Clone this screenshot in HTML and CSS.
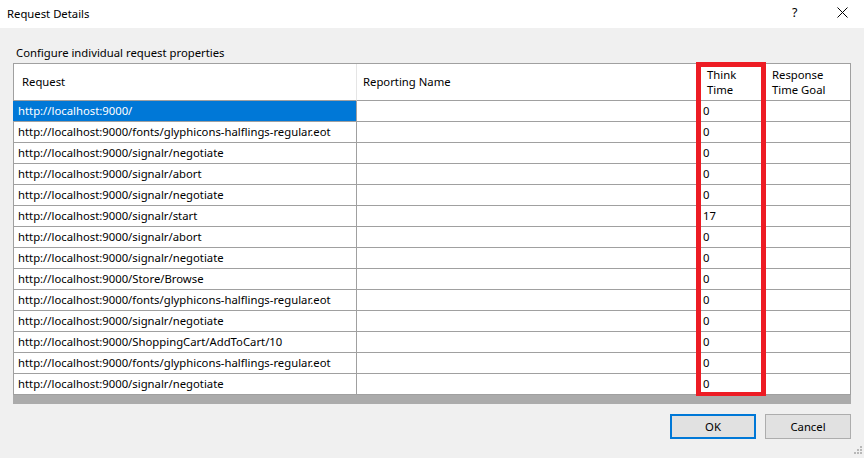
FILE: index.html
```html
<!DOCTYPE html>
<html>
<head>
<meta charset="utf-8">
<link rel="stylesheet" href="styles.css">
</head>
<body>
<div class="dialog">
  <div class="titlebar">
    <span class="title">Request Details</span>
    <span class="help">?</span>
    <span class="close"><svg width="11" height="11" viewBox="0 0 11 11"><path d="M0.5 0.5 L10.5 10.5 M10.5 0.5 L0.5 10.5" stroke="#000" stroke-width="1" fill="none"/></svg></span>
  </div>
  <div class="body">
    <div class="label">Configure individual request properties</div>
    <div class="gridwrap">
      <div class="grid">
        <div class="hc c1">Request</div>
        <div class="hc c2">Reporting Name</div>
        <div class="hc c3"><span>Think</span><span>Time</span></div>
        <div class="hc c4"><span>Response</span><span>Time Goal</span></div>

        <div class="dc c1 sel">http://localhost:9000/</div><div class="dc c2"></div><div class="dc c3">0</div><div class="dc c4"></div>
        <div class="dc c1">http://localhost:9000/fonts/glyphicons-halflings-regular.eot</div><div class="dc c2"></div><div class="dc c3">0</div><div class="dc c4"></div>
        <div class="dc c1">http://localhost:9000/signalr/negotiate</div><div class="dc c2"></div><div class="dc c3">0</div><div class="dc c4"></div>
        <div class="dc c1">http://localhost:9000/signalr/abort</div><div class="dc c2"></div><div class="dc c3">0</div><div class="dc c4"></div>
        <div class="dc c1">http://localhost:9000/signalr/negotiate</div><div class="dc c2"></div><div class="dc c3">0</div><div class="dc c4"></div>
        <div class="dc c1">http://localhost:9000/signalr/start</div><div class="dc c2"></div><div class="dc c3">17</div><div class="dc c4"></div>
        <div class="dc c1">http://localhost:9000/signalr/abort</div><div class="dc c2"></div><div class="dc c3">0</div><div class="dc c4"></div>
        <div class="dc c1">http://localhost:9000/signalr/negotiate</div><div class="dc c2"></div><div class="dc c3">0</div><div class="dc c4"></div>
        <div class="dc c1">http://localhost:9000/Store/Browse</div><div class="dc c2"></div><div class="dc c3">0</div><div class="dc c4"></div>
        <div class="dc c1">http://localhost:9000/fonts/glyphicons-halflings-regular.eot</div><div class="dc c2"></div><div class="dc c3">0</div><div class="dc c4"></div>
        <div class="dc c1">http://localhost:9000/signalr/negotiate</div><div class="dc c2"></div><div class="dc c3">0</div><div class="dc c4"></div>
        <div class="dc c1">http://localhost:9000/ShoppingCart/AddToCart/10</div><div class="dc c2"></div><div class="dc c3">0</div><div class="dc c4"></div>
        <div class="dc c1">http://localhost:9000/fonts/glyphicons-halflings-regular.eot</div><div class="dc c2"></div><div class="dc c3">0</div><div class="dc c4"></div>
        <div class="dc c1">http://localhost:9000/signalr/negotiate</div><div class="dc c2"></div><div class="dc c3">0</div><div class="dc c4"></div>
      </div>
      <div class="scrollstrip"></div>
      <div class="highlight"></div>
    </div>
    <div class="buttons">
      <button class="btn ok">OK</button>
      <button class="btn">Cancel</button>
    </div>
  </div>
  <svg class="grip" width="10" height="10" viewBox="0 0 10 10">
    <rect x="8" y="0" width="2" height="2" fill="#b8b8b8"/>
    <rect x="5" y="3" width="2" height="2" fill="#b8b8b8"/>
    <rect x="8" y="3" width="2" height="2" fill="#b8b8b8"/>
    <rect x="2" y="6" width="2" height="2" fill="#b8b8b8"/>
    <rect x="5" y="6" width="2" height="2" fill="#b8b8b8"/>
    <rect x="8" y="6" width="2" height="2" fill="#b8b8b8"/>
  </svg>
</div>
</body>
</html>
```
FILE: styles.css
```css
html, body {
  margin: 0;
  padding: 0;
}
body {
  width: 864px;
  height: 458px;
  overflow: hidden;
  background: #f0f0f0;
  font-family: "Noto Sans", "Liberation Sans", sans-serif;
  font-size: 11.3px;
  color: #000;
}
.dialog {
  position: relative;
  width: 864px;
  height: 458px;
}
.titlebar {
  height: 28px;
  background: #fff;
  display: flex;
  align-items: center;
  padding-left: 7px;
}
.title {
  flex: 1;
  font-size: 11.3px;
  margin-top: -2px;
}
.help {
  width: 10px;
  font-size: 12.5px;
  margin-right: 35px;
  margin-top: -3px;
}
.close {
  display: flex;
  margin-right: 16px;
  margin-top: -3px;
}
.body {
  padding: 17px 0 0 13px;
}
.label {
  padding-left: 3px;
  line-height: 16px;
  height: 18px;
}
.gridwrap {
  position: relative;
  width: 838px;
}
.grid {
  display: grid;
  grid-template-columns: 343px 342px 67px 85px;
  border-left: 1px solid #a0a0a0;
  border-top: 1px solid #a0a0a0;
  background: #fff;
}
.hc {
  box-sizing: border-box;
  height: 37px;
  border-right: 1px solid #e5e5e5;
  border-bottom: 1px solid #a0a0a0;
  display: flex;
  flex-direction: column;
  justify-content: center;
  padding-left: 8px;
  line-height: 15px;
  padding-bottom: 1px;
}
.hc span {
  display: block;
  height: 15px;
}
.hc.c4 {
  border-right-color: #a0a0a0;
  padding-left: 6px;
}
.hc.c2 {
  padding-left: 6px;
}
.dc {
  box-sizing: border-box;
  height: 21px;
  border-right: 1px solid #a0a0a0;
  border-bottom: 1px solid #a0a0a0;
  padding-left: 4px;
  line-height: 20px;
  white-space: nowrap;
  overflow: hidden;
}
.dc.sel {
  background: #0078d7;
  color: #fff;
  margin-left: -1px;
  padding-left: 5px;
  width: 344px;
}
.scrollstrip {
  height: 9px;
  background: #ababab;
}
.highlight {
  position: absolute;
  left: 683px;
  top: -1px;
  width: 70px;
  height: 334px;
  box-sizing: border-box;
  border: 5px solid #ed1c24;
  border-bottom-width: 4px;
}
.buttons {
  display: flex;
  justify-content: flex-end;
  gap: 9px;
  width: 838px;
  margin-top: 10px;
}
.btn {
  box-sizing: border-box;
  width: 86px;
  height: 25px;
  background: #e1e1e1;
  border: 1px solid #adadad;
  font-family: "Noto Sans", "Liberation Sans", sans-serif;
  font-size: 11.3px;
  color: #000;
  padding: 0;
}
.btn.ok {
  border: 2px solid #0078d7;
}
.grip {
  position: absolute;
  right: 2px;
  bottom: 2px;
}
```
